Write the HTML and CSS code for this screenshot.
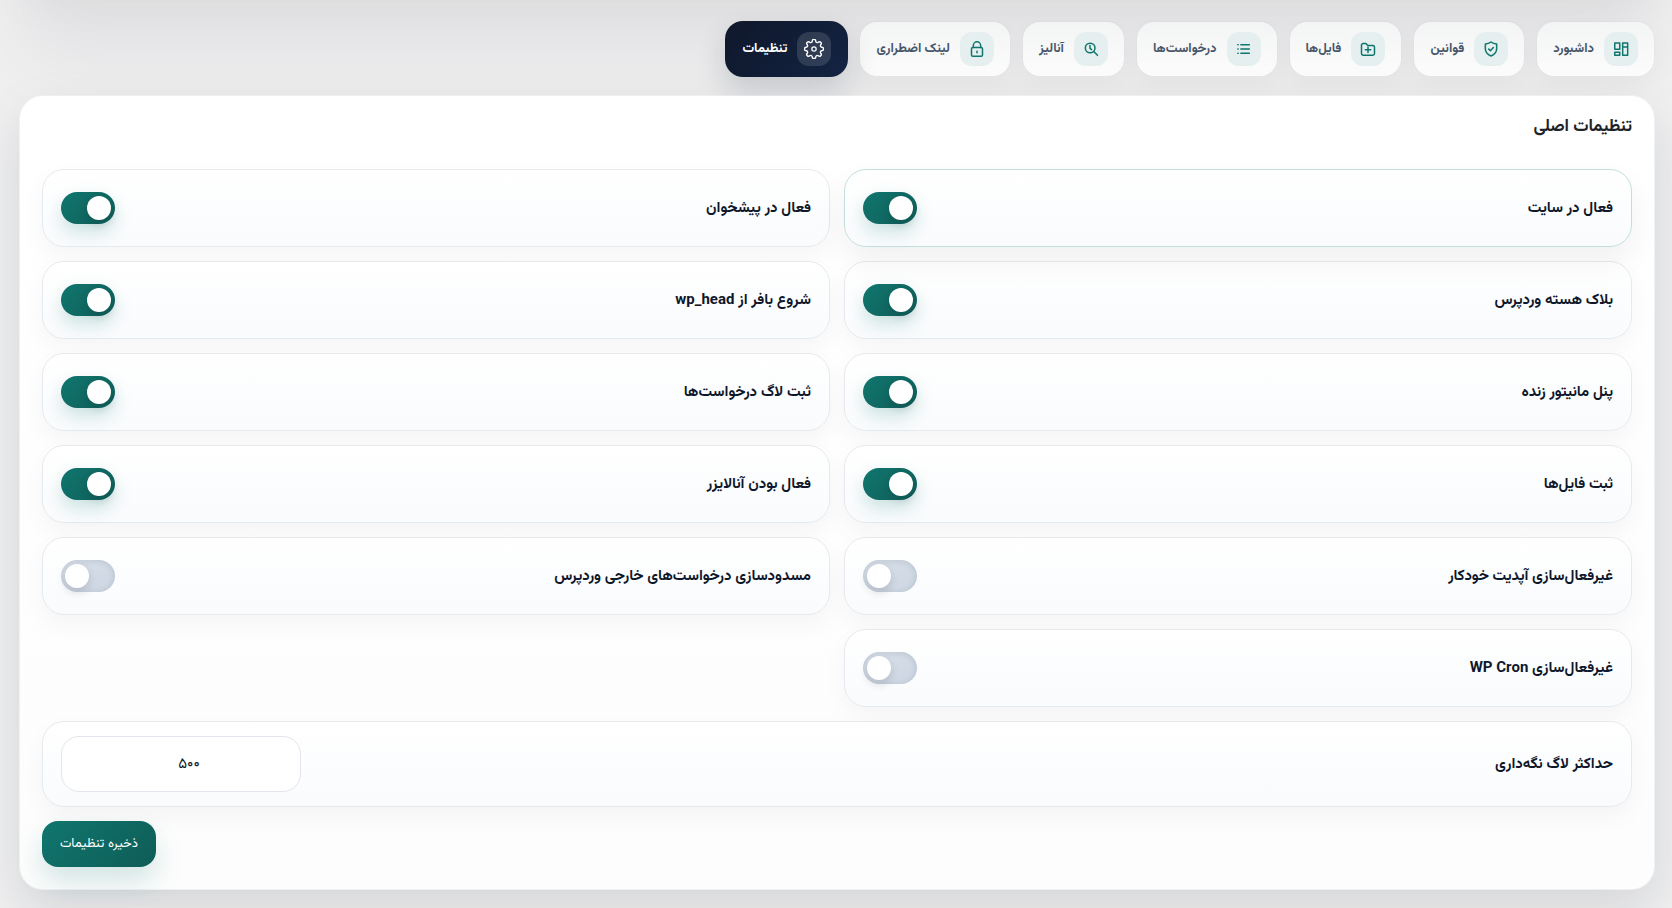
FILE: index.html
```html
<!DOCTYPE html>
<html lang="fa" dir="rtl">
<head>
<meta charset="utf-8">
<meta name="viewport" content="width=device-width, initial-scale=1">
<title>تنظیمات</title>
<link rel="stylesheet" href="styles.css">
</head>
<body>
<div class="shell">
  <nav class="tabs">
    <button type="button" class="tab"><span class="tab-icon"><svg viewBox="0 0 24 24" aria-hidden="true"><path d="M4.500 4.800h6v7.600h-6zM4.500 15.800h6v3.600h-6zM14 4.800h6v14.600h-6zM14 9.600h6"/></svg></span><span>داشبورد</span></button>
    <button type="button" class="tab"><span class="tab-icon"><svg viewBox="0 0 24 24" aria-hidden="true"><path d="M12 3.600c2 1.500 4.300 2.300 6.800 2.500v5.400c0 4.300-2.600 7.300-6.800 8.900-4.200-1.600-6.800-4.600-6.800-8.900V6.100c2.500-.2 4.800-1 6.800-2.500z"/><path d="M9.300 12.100l2 1.900 3.500-3.700"/></svg></span><span>قوانین</span></button>
    <button type="button" class="tab"><span class="tab-icon"><svg viewBox="0 0 24 24" aria-hidden="true"><path d="M4.200 17.500v-10a2 2 0 0 1 2-2h3.300l2.300 2.300h6a2 2 0 0 1 2 2v7.700a2 2 0 0 1-2 2H6.200a2 2 0 0 1-2-2z"/><path d="M12 9.500v6.600M8.700 12.800h6.600"/></svg></span><span>فایل‌ها</span></button>
    <button type="button" class="tab"><span class="tab-icon"><svg viewBox="0 0 24 24" aria-hidden="true"><path d="M8.200 6.800h10.200M8.200 12h10.200M8.200 17.200h10.200M4.600 6.800h.4M4.600 12h.4M4.600 17.200h.4"/></svg></span><span>درخواست‌ها</span></button>
    <button type="button" class="tab"><span class="tab-icon"><svg viewBox="0 0 24 24" aria-hidden="true"><circle cx="11" cy="10.800" r="5.800"/><path d="M10.800 7.700v3.500l1.900 1.500M15.300 15.100l4.500 4.500"/></svg></span><span>آنالیز</span></button>
    <button type="button" class="tab"><span class="tab-icon"><svg viewBox="0 0 24 24" aria-hidden="true"><rect x="5.400" y="10.200" width="13.200" height="10.600" rx="1.600"/><path d="M7.600 10.200V7.800a4.400 4.400 0 0 1 8.800 0v2.400M12 14.600v2"/></svg></span><span>لینک اضطراری</span></button>
    <button type="button" class="tab tab-active" aria-current="page"><span class="tab-icon"><svg viewBox="0 0 24 24" aria-hidden="true"><circle cx="12" cy="12" r="2.600"/><path transform="translate(12 12) scale(1.1) translate(-12 -12)" d="M20.480 13.960A1.600 1.600 0 0 0 19.380 16.610A1.960 1.960 0 0 1 16.610 19.380A1.600 1.600 0 0 0 13.960 20.480A1.960 1.960 0 0 1 10.040 20.480A1.600 1.600 0 0 0 7.390 19.380A1.960 1.960 0 0 1 4.620 16.610A1.600 1.600 0 0 0 3.520 13.960A1.960 1.960 0 0 1 3.520 10.040A1.600 1.600 0 0 0 4.620 7.390A1.960 1.960 0 0 1 7.390 4.620A1.600 1.600 0 0 0 10.040 3.520A1.960 1.960 0 0 1 13.960 3.520A1.600 1.600 0 0 0 16.610 4.620A1.960 1.960 0 0 1 19.380 7.390A1.600 1.600 0 0 0 20.480 10.040A1.960 1.960 0 0 1 20.480 13.960z"/></svg></span><span>تنظیمات</span></button>
  </nav>
  <form class="panel">
    <h1 class="panel-title">تنظیمات اصلی</h1>
    <div class="grid">
      <label class="card card-highlight"><span>فعال در سایت</span><input type="checkbox" class="switch" checked></label>
      <label class="card"><span>فعال در پیشخوان</span><input type="checkbox" class="switch" checked></label>
      <label class="card"><span>بلاک هسته وردپرس</span><input type="checkbox" class="switch" checked></label>
      <label class="card"><span>شروع بافر از wp_head</span><input type="checkbox" class="switch" checked></label>
      <label class="card"><span>پنل مانیتور زنده</span><input type="checkbox" class="switch" checked></label>
      <label class="card"><span>ثبت لاگ درخواست‌ها</span><input type="checkbox" class="switch" checked></label>
      <label class="card"><span>ثبت فایل‌ها</span><input type="checkbox" class="switch" checked></label>
      <label class="card"><span>فعال بودن آنالایزر</span><input type="checkbox" class="switch" checked></label>
      <label class="card"><span>غیرفعال‌سازی آپدیت خودکار</span><input type="checkbox" class="switch"></label>
      <label class="card"><span>مسدودسازی درخواست‌های خارجی وردپرس</span><input type="checkbox" class="switch"></label>
      <label class="card"><span>غیرفعال‌سازی WP Cron</span><input type="checkbox" class="switch"></label>
      <label class="card card-wide"><span>حداکثر لاگ نگه‌داری</span><input type="text" inputmode="numeric" class="number" value="۵۰۰"></label>
    </div>
    <div class="actions"><button type="submit" class="save">ذخیره تنظیمات</button></div>
  </form>
</div>
</body>
</html>
```
FILE: styles.css
```css
* { box-sizing: border-box; }

body {
  margin: 0;
  min-height: 100vh;
  position: relative;
  overflow-x: hidden;
  background: #f0f0f1;
  color: #0f172a;
  font-family: Vazirmatn, Roboto, "DejaVu Sans", sans-serif;
}

/* soft shade falling from the top edge */
body::before {
  content: "";
  position: absolute;
  top: -200px;
  left: 20px;
  right: 18px;
  height: 200px;
  box-shadow: 0 60px 80px rgba(15, 23, 42, 0.06), 0 8px 40px rgba(15, 23, 42, 0.03);
}

.shell { position: relative; padding: 21px 17px 18px 19px; }

.tabs { display: flex; flex-wrap: wrap; gap: 11px; }

.tab {
  display: flex;
  align-items: center;
  gap: 10px;
  padding: 10px 16px;
  border: 1px solid rgba(148, 163, 184, 0.08);
  border-radius: 18px;
  background: linear-gradient(180deg, #f3f4f4, #fcfcfc);
  background-clip: padding-box;
  box-shadow: 0 10px 24px rgba(15, 23, 42, 0.03);
  color: #475569;
  font: 700 13px/21px Vazirmatn, Roboto, "DejaVu Sans", sans-serif;
}

.tab-icon {
  display: grid;
  place-items: center;
  width: 34px;
  height: 34px;
  border-radius: 12px;
  background: #e6efef;
  color: #0f766e;
}

.tab-icon svg {
  width: 20px;
  height: 20px;
  fill: none;
  stroke: currentColor;
  stroke-width: 1.8;
  stroke-linecap: round;
  stroke-linejoin: round;
}

.tab-active {
  border-color: transparent;
  background: linear-gradient(135deg, #0f172a, #132443) border-box;
  box-shadow: 0 14px 30px rgba(15, 23, 42, 0.16);
  color: #fff;
}

.tab-active .tab-icon { background: rgba(255, 255, 255, 0.13); color: #fff; }

.tab-active .tab-icon svg { stroke-width: 1.5; }

.panel {
  position: relative;
  margin-top: 18px;
  padding: 16px 22px 22px;
  border: 1px solid rgba(255, 255, 255, 0.1);
  border-radius: 24px;
  background: linear-gradient(180deg, #fff, #fdfdfd) padding-box;
  box-shadow: 0 20px 50px rgba(15, 23, 42, 0.12);
}

.panel-title {
  margin: 0 0 27px;
  color: #1d2327;
  font-size: 17px;
  font-weight: 700;
  line-height: 30px;
}

.grid {
  display: grid;
  grid-template-columns: repeat(2, minmax(0, 1fr));
  gap: 14px;
}

.card {
  display: flex;
  align-items: center;
  justify-content: space-between;
  gap: 16px;
  min-height: 78px;
  padding: 14px 18px;
  border: 1px solid #e6eaee;
  border-radius: 22px;
  background: linear-gradient(180deg, #fff, #f9fbfd);
  box-shadow: 0 10px 24px rgba(0, 0, 0, 0.04);
  font-size: 15px;
  font-weight: 700;
  line-height: 25px;
}

.card-highlight {
  position: relative;
  border-color: #c3dfdc;
  box-shadow: 0 14px 30px rgba(0, 0, 0, 0.06);
}

.card-wide { grid-column: 1 / -1; }

.switch {
  appearance: none;
  direction: ltr;
  display: flex;
  flex: none;
  width: 54px;
  height: 32px;
  margin: 0;
  padding: 4px;
  border-radius: 16px;
  background: linear-gradient(135deg, #dbe2ec, #cbd5e1);
  box-shadow: inset 0 1px 6px rgba(15, 23, 42, 0.12);
}

.switch::before {
  content: "";
  width: 24px;
  height: 24px;
  border-radius: 50%;
  background: #fff;
  box-shadow: 0 4px 10px rgba(15, 23, 42, 0.16);
}

.switch:checked {
  justify-content: flex-end;
  background: linear-gradient(135deg, #0f766e, #115e59);
  box-shadow: 0 8px 18px rgba(15, 118, 110, 0.2);
}

.number {
  width: 240px;
  height: 56px;
  padding: 0 8px 0 24px;
  border: 1px solid #e2e6ec;
  border-radius: 18px;
  background: #fff;
  color: #0f172a;
  font: 400 15px/24px Vazirmatn, Roboto, "DejaVu Sans", sans-serif;
  text-align: center;
}

.actions { display: flex; justify-content: flex-end; margin-top: 14px; }

.save {
  height: 46px;
  padding: 0 18px;
  border: 0;
  border-radius: 16px;
  background: linear-gradient(135deg, #0f766e, #0f5c57);
  box-shadow: 0 14px 28px rgba(15, 118, 110, 0.18);
  color: #fff;
  font: 400 13px/21px Vazirmatn, Roboto, "DejaVu Sans", sans-serif;
}
```
